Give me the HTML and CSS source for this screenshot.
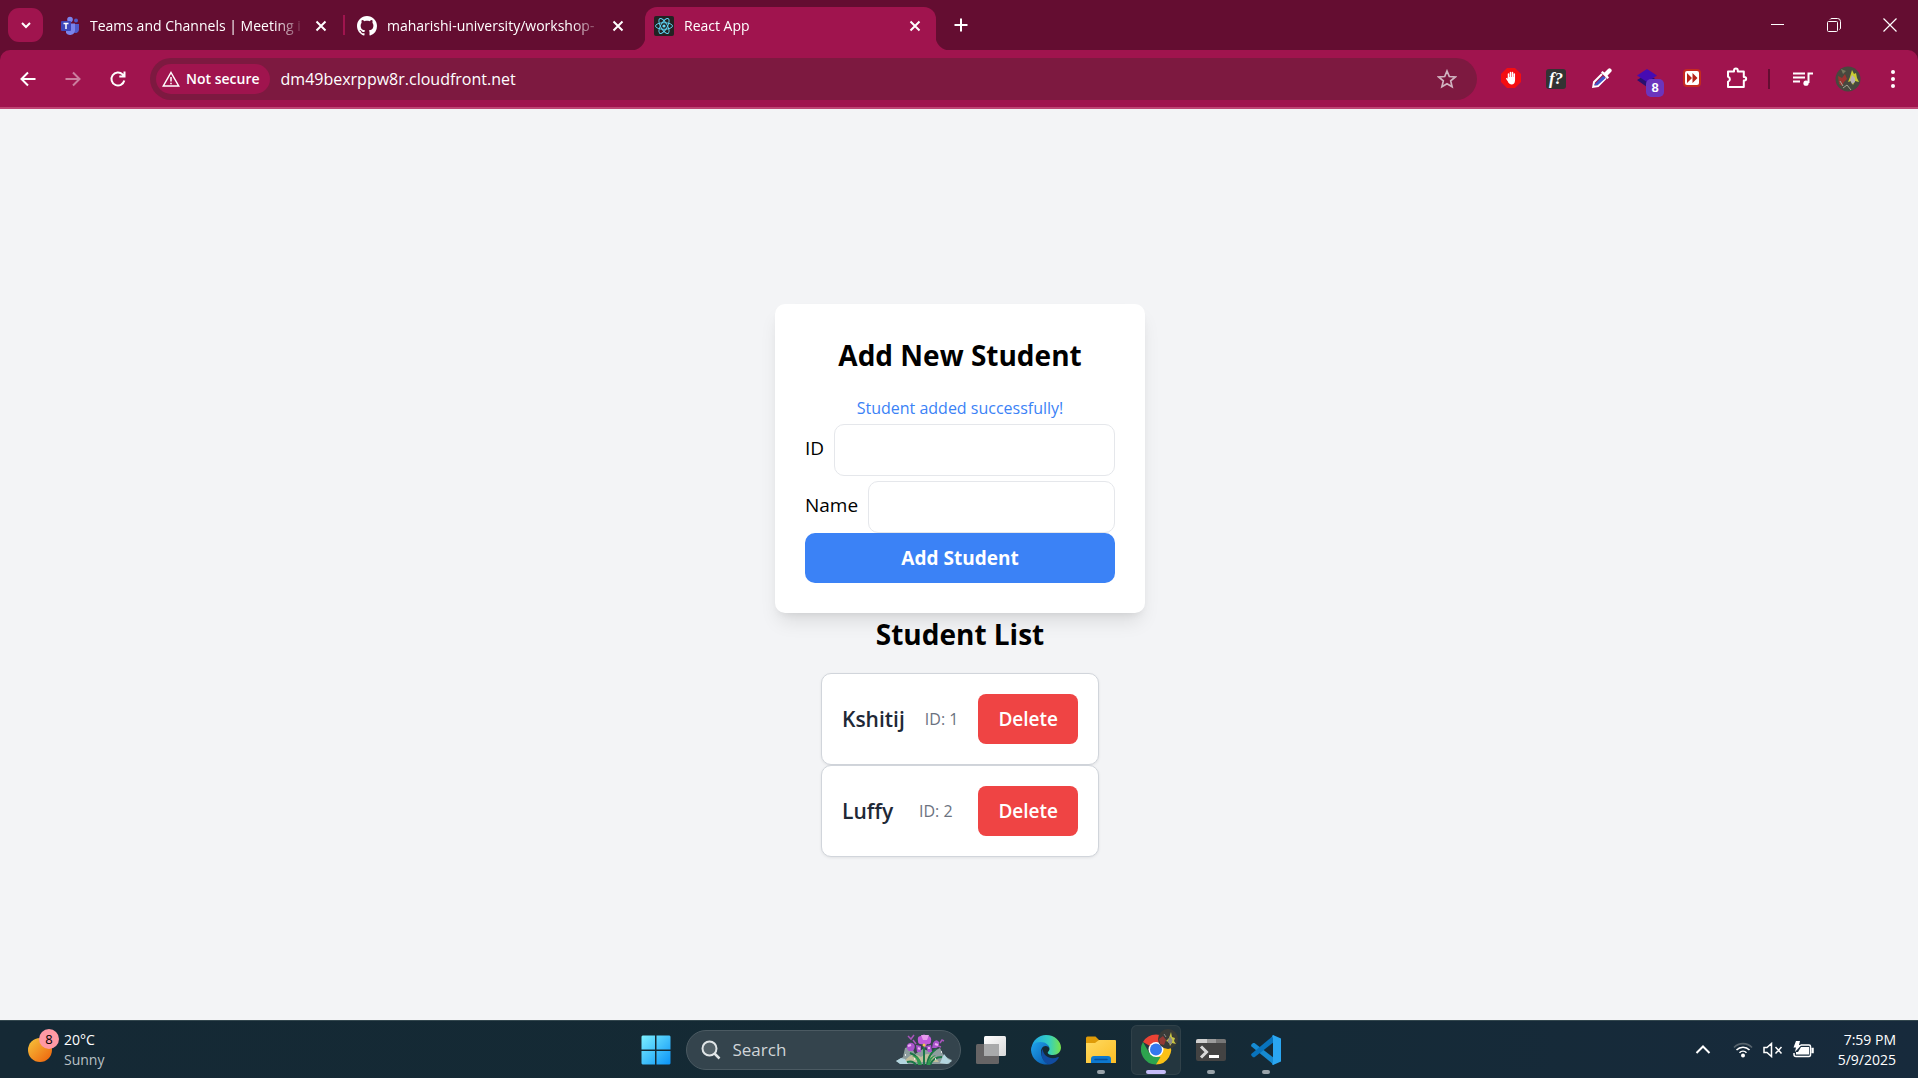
FILE: index.html
```html
<!DOCTYPE html>
<html lang="en">
<head>
<meta charset="utf-8">
<meta name="viewport" content="width=device-width, initial-scale=1">
<title>React App</title>
<link rel="stylesheet" href="styles.css">
</head>
<body>
<header class="browser">
  <div class="tabstrip">
    <button class="tab-search" aria-label="Search tabs"><svg width="16" height="16" viewBox="0 0 16 16" fill="none" stroke="#fff" stroke-width="2"><path d="M4 6l4 4 4-4"/></svg></button>
    <div class="tabs">
      <div class="tab">
        <svg class="favicon" viewBox="0 0 20 20"><circle cx="10" cy="3.600" r="2.800" fill="#7b83eb"/><circle cx="16" cy="4.600" r="2" fill="#5059c9"/><path d="M13 8h6v6a3.500 3.500 0 0 1-6 2z" fill="#5059c9"/><path d="M6 7.500h9v7a5 5 0 0 1-9 2.500z" fill="#7b83eb"/><rect x="1" y="5" width="10" height="10" rx="1" fill="#3d46b8"/><path d="M3.500 7.500h5M6 7.500v5.500" stroke="#fff" stroke-width="1.500"/></svg>
        <span class="tab-title">Teams and Channels | Meeting i</span>
        <button class="tab-close" aria-label="Close tab"><svg width="12" height="12" viewBox="0 0 12 12" stroke="#fff" stroke-width="2"><path d="M1.500 1.500l9 9M10.500 1.500l-9 9"/></svg></button>
      </div>
      <div class="tab tab-divided">
        <svg class="favicon" viewBox="0 0 16 16" fill="#fff"><path d="M8 0C3.580 0 0 3.580 0 8c0 3.540 2.290 6.530 5.470 7.590.4.070.55-.17.55-.38 0-.19-.01-.82-.01-1.490-2.010.37-2.530-.49-2.690-.94-.09-.23-.48-.94-.82-1.130-.28-.15-.68-.52-.01-.53.63-.01 1.080.58 1.230.82.72 1.210 1.870.87 2.330.66.07-.52.28-.87.51-1.070-1.780-.2-3.640-.89-3.640-3.950 0-.87.31-1.590.82-2.150-.08-.2-.36-1.020.08-2.120 0 0 .67-.21 2.200.82.64-.18 1.320-.27 2-.27s1.360.09 2 .27c1.530-1.040 2.200-.82 2.200-.82.44 1.100.16 1.920.08 2.120.51.56.82 1.270.82 2.150 0 3.070-1.870 3.750-3.650 3.950.29.25.54.73.54 1.480 0 1.070-.01 1.930-.01 2.200 0 .21.15.46.55.38A8.010 8.010 0 0 0 16 8c0-4.420-3.580-8-8-8z"/></svg>
        <span class="tab-title">maharishi-university/workshop-</span>
        <button class="tab-close" aria-label="Close tab"><svg width="12" height="12" viewBox="0 0 12 12" stroke="#fff" stroke-width="2"><path d="M1.500 1.500l9 9M10.500 1.500l-9 9"/></svg></button>
      </div>
      <div class="tab tab-active">
        <svg class="favicon" viewBox="0 0 20 20"><rect width="20" height="20" rx="2" fill="#222"/><g fill="none" stroke="#61dafb" stroke-width=".9"><ellipse cx="10" cy="10" rx="8.500" ry="3.300"/><ellipse cx="10" cy="10" rx="8.500" ry="3.300" transform="rotate(60 10 10)"/><ellipse cx="10" cy="10" rx="8.500" ry="3.300" transform="rotate(120 10 10)"/></g><circle cx="10" cy="10" r="1.600" fill="#61dafb"/></svg>
        <span class="tab-title">React App</span>
        <button class="tab-close" aria-label="Close tab"><svg width="12" height="12" viewBox="0 0 12 12" stroke="#fff" stroke-width="2"><path d="M1.500 1.500l9 9M10.500 1.500l-9 9"/></svg></button>
      </div>
    </div>
    <button class="new-tab" aria-label="New tab"><svg width="14" height="14" viewBox="0 0 14 14" stroke="#fff" stroke-width="2"><path d="M7 0.500v13M0.500 7h13"/></svg></button>
    <div class="window-controls">
      <button aria-label="Minimize"><svg width="14" height="14" viewBox="0 0 14 14" stroke="#fff"><path d="M0 6.500h13"/></svg></button>
      <button aria-label="Restore"><svg width="14" height="14" viewBox="0 0 14 14" fill="none" stroke="#fff"><rect x=".5" y="3.500" width="10" height="10" rx="1"/><path d="M3 1.500Q3.500.5 5 .5h5.500a3 3 0 0 1 3 3V10q0 1-1 1.500"/></svg></button>
      <button aria-label="Close"><svg width="14" height="14" viewBox="0 0 14 14" stroke="#fff" stroke-width="1.200"><path d="M.5.5l13 13M13.500.5l-13 13"/></svg></button>
    </div>
  </div>
  <div class="toolbar">
    <div class="nav-buttons">
      <button aria-label="Back"><svg width="20" height="20" viewBox="0 0 20 20" fill="none" stroke="#fff" stroke-width="2"><path d="M17.500 10H3.500M10 3.500L3.500 10l6.500 6.500"/></svg></button>
      <button aria-label="Forward" class="dim"><svg width="20" height="20" viewBox="0 0 20 20" fill="none" stroke="#fff" stroke-width="2"><path d="M2.500 10h14M10 3.500l6.500 6.500-6.500 6.500"/></svg></button>
      <button aria-label="Reload"><svg width="20" height="20" viewBox="0 0 20 20" fill="none" stroke="#fff" stroke-width="2"><path d="M16.300 11.500A6.500 6.500 0 1 1 14.600 5.400L16 7M16.500 2.500v5.100h-5.200"/></svg></button>
    </div>
    <div class="omnibox">
      <button class="security-chip"><svg width="18" height="16" viewBox="0 0 18 16" fill="none" stroke="#fff" stroke-width="1.500"><path d="M9 1.500L16.700 15H1.300zM9 6v4.500M9 11.700v1.500"/></svg>Not secure</button>
      <input class="address" type="text" aria-label="Address" value="dm49bexrppw8r.cloudfront.net">
      <button class="bookmark" aria-label="Bookmark"><svg width="20" height="20" viewBox="0 0 20 20" fill="none" stroke="#d0b4c0" stroke-width="1.700"><path d="M10 2l2.300 5.500 6 .5-4.600 3.900 1.400 5.900L10 14.700l-5.100 3.100 1.400-5.900L1.700 8l6-.5z"/></svg></button>
    </div>
    <div class="extensions">
      <button aria-label="Ad blocker"><svg width="20" height="20" viewBox="0 0 20 20"><path d="M6 0h8l6 6v8l-6 6H6l-6-6V6z" fill="#f40d12"/><path d="M7.500 6v5M9.500 4.500v6M11.500 4.500V11M13.300 6v6" stroke="#fff" stroke-width="1.500" stroke-linecap="round"/><path d="M6.800 9h7.200v3.500c0 2.700-1.400 4-3.400 4-1.700 0-2.700-.9-3.500-2.500z" fill="#fff"/><path d="M5.800 10.700l2 3" stroke="#fff" stroke-width="1.500" stroke-linecap="round"/></svg></button>
      <button aria-label="Font finder" class="font-finder">f?</button>
      <button aria-label="Color picker"><svg width="20" height="20" viewBox="0 0 20 20"><path d="M10 6L2 14l-.8 4.800L6 18l8-8" fill="none" stroke="#fff" stroke-width="2"/><path d="M11 9l-7.500 7.500 1.800.1L12.500 10z" fill="#4054c8" stroke="#4054c8" stroke-width="1.500"/><path d="M9 4.500l1.500-1.500 2 1.500L16 1q1.500-1.500 3 0t0 3l-3.500 3.500L17 9.500 15.500 11z" fill="#fff"/></svg></button>
      <button aria-label="Layers" class="layers"><svg width="20" height="20" viewBox="0 0 20 20"><path d="M0 12l10-6 10 6-10 7z" fill="#27106f"/><path d="M0 7.500L10 1l10 6.500L10 14z" fill="#460bb3"/></svg><span class="badge">8</span></button>
      <button aria-label="Fast forward"><svg width="20" height="20" viewBox="0 0 20 20"><rect x="1" y="1" width="18" height="18" rx="4" fill="#c52b20"/><rect x="3" y="3" width="14" height="14" rx="2" fill="#fff"/><path d="M5 5l5 5-5 5zM10.500 5l5 5-5 5z" fill="#b52319"/></svg></button>
      <button aria-label="Extensions"><svg width="22" height="22" viewBox="0 0 22 22" fill="none" stroke="#fff" stroke-width="2" stroke-linejoin="round"><path d="M2 4.500h6V3.500a1.700 1.700 0 0 1 3.800 0v1h6v5.500h.6a1.600 1.600 0 0 1 0 3.500h-.6V20H2v-5.300a2.600 2.600 0 0 0 0-5z"/></svg></button>
    </div>
    <div class="profile-area">
      <button aria-label="Media controls"><svg width="20" height="20" viewBox="0 0 20 20" fill="none" stroke="#fff" stroke-width="2"><path d="M0 4.500h12M0 8.500h12M0 12.500h7M15.500 14V4.500H20"/><circle cx="13" cy="14.200" r="2.600" fill="#fff" stroke="none"/></svg></button>
      <button aria-label="Profile"><svg width="26" height="26" viewBox="0 0 26 26"><circle cx="13" cy="13" r="12.500" fill="#47483e"/><path d="M3 10l4 2 3-4 2 5-3 3-2 4-3-2z" fill="#9b3431"/><path d="M6 3l5 2-3 3z" fill="#77795f"/><path d="M17 4l2 4 2-1 1 5 2 4-4-1-2 4-2-4-3 1 2-5z" fill="#c9cc32"/><path d="M17 9l3 3v4l-3 2-2-4z" fill="#b8b1b4"/><path d="M8 22l4-3 4 5M5 15l3 5" stroke="#a6a594" fill="none"/></svg></button>
      <button aria-label="Menu"><svg width="20" height="20" viewBox="0 0 20 20" fill="#fff"><circle cx="10" cy="3" r="2"/><circle cx="10" cy="10" r="2"/><circle cx="10" cy="17" r="2"/></svg></button>
    </div>
  </div>
</header>

<main class="page">
  <section class="card">
    <h2 class="heading">Add New Student</h2>
    <p class="message">Student added successfully!</p>
    <form class="student-form">
      <div class="field"><label for="student-id">ID</label><input id="student-id" type="text"></div>
      <div class="field"><label for="student-name">Name</label><input id="student-name" type="text"></div>
      <button type="button" class="add-button">Add Student</button>
    </form>
  </section>
  <section class="student-section">
    <h2 class="heading">Student List</h2>
    <ul class="student-list">
      <li><span class="student-name">Kshitij</span><span class="student-id">ID: 1</span><button class="delete-button">Delete</button></li>
      <li><span class="student-name">Luffy</span><span class="student-id">ID: 2</span><button class="delete-button">Delete</button></li>
    </ul>
  </section>
</main>

<footer class="taskbar">
  <button class="weather">
    <span class="weather-icon"><svg width="24" height="24" viewBox="0 0 24 24"><defs><linearGradient id="sun" x1="0" y1="0" x2="1" y2="1"><stop offset="0" stop-color="#f6c63c"/><stop offset="1" stop-color="#ee5f0b"/></linearGradient></defs><circle cx="12" cy="12" r="12" fill="url(#sun)"/></svg><span class="weather-badge">8</span></span>
    <span class="weather-text"><span>20°C</span><span class="muted">Sunny</span></span>
  </button>
  <div class="apps">
    <button class="app" aria-label="Start"><svg width="30" height="30" viewBox="0 0 30 30"><defs><linearGradient id="win" x1="0" y1="0" x2="1" y2="1"><stop offset="0" stop-color="#7cf0ff"/><stop offset="1" stop-color="#0a93f7"/></linearGradient></defs><path d="M1.500.5H14v14H.5v-13zM15.500.5h13l1 1v13h-14zM.5 16H14v13.500H1.500l-1-1zM15.500 16h14v12.500l-1 1h-13z" fill="url(#win)"/></svg></button>
    <div class="search">
      <svg width="20" height="20" viewBox="0 0 20 20" fill="none" stroke="#e0e5e7" stroke-width="2"><circle cx="8.500" cy="8.500" r="7" fill="#536168"/><path d="M13.500 13.500l5 5" stroke-width="2.500"/></svg>
      <input type="text" placeholder="Search" aria-label="Search">
      <svg width="56" height="32" viewBox="0 0 56 32"><path d="M0 27l7-4 2-9 6-2 4 8 8-5 9 3 8-4 4 8 8 4-3 4H5z" fill="#8d9d9e"/><path d="M8 28q8-12 17-5 8-8 18 5z" fill="#c2bf9c"/><path d="M0 27l5-3 4 1 3 5H4zM44 29l4-9 4 5 4 2-5 3z" fill="#b4d6df"/><path d="M28 31V13M24 31q-1-9-10-12M31 31q1-10 9-16M34 31q3-8 12-8M20 31q-3-5-9-3" fill="none" stroke="#1c7747" stroke-width="2"/><path d="M22 31q-1-8-6-9 8-1 10 9zM31 31q2-9 9-10-6 4-6 10z" fill="#2f9b50"/><path d="M22 7q-1-5 3-5 3-3 6 0 5 0 4 5 0 4-4 3l-2 4-2-4q-5 1-5-3z" fill="#c25bdb"/><path d="M25 1h8l-2 5h-4z" fill="#e79bed"/><path d="M11 11q3-4 7-1 2 3-1 7h-4q-3-2-2-6zM20 11l5 1v6h-4zM30 12l5-1 1 7h-4zM37 9q3-5 6-1 1 5-3 6h-4z" fill="#a953cb"/><path d="M12 2l3 3 3-4M17 6l3 4M44 9l2-3 2 1M42 12l3 1" stroke="#a854bb" stroke-width="1.500" fill="none"/><path d="M12 12l3-1M39 10l3 1M22 14l2 1M32 14h2" stroke="#efaff5" stroke-width="2"/><circle cx="28" cy="11" r="1.500" fill="#f2c650"/><path d="M9 21h1M45 18h1M18 25h1M39 25h1" stroke="#fff" stroke-width="1.500"/></svg>
    </div>
    <button class="app" aria-label="Task view"><svg width="30" height="28" viewBox="0 0 30 28"><defs><linearGradient id="tv" x1="0" y1="0" x2="1" y2="1"><stop offset="0" stop-color="#fff"/><stop offset="1" stop-color="#d8d8d8"/></linearGradient></defs><rect y="8" width="23" height="20" rx="1.500" fill="#666465"/><rect x="8" width="22" height="20" rx="1.500" fill="url(#tv)"/><path d="M8 8h15v12H8z" fill="#a9aaab"/></svg></button>
    <button class="app" aria-label="Edge"><svg width="30" height="30" viewBox="0 0 30 30"><defs><linearGradient id="e1" x1="0" y1="0" x2="1" y2="0"><stop offset="0" stop-color="#1ea4e9"/><stop offset=".6" stop-color="#35cfbf"/><stop offset="1" stop-color="#78e34a"/></linearGradient><linearGradient id="e2" x1="0" y1="0" x2="1" y2="1"><stop offset="0" stop-color="#1fa4ec"/><stop offset="1" stop-color="#0956ad"/></linearGradient></defs><path d="M.5 13C1.500 5.500 7.500 0 15 0c9 0 15 6.500 15 12.500 0 4.500-3.500 7.500-8 7.500-4 0-6-1.500-5-3 .8-1 1.500-1.800 1.500-3C18.500 10.500 14.500 8 10 8 5 8 2 10 .5 13z" fill="url(#e1)"/><path d="M0 15c0-4.500 4-8 9.500-8 5.500 0 9 3.500 9 7 0-1.500-1.800-3-4-3-3 0-4.500 3-4.500 6 0 6 5 12.500 9 12A15 15 0 0 1 0 15z" fill="url(#e2)"/><path d="M11.500 14C8 20 13 29 19 29.500c4-1 7-3.500 8.800-6.800.3-.7-.2-1-.8-.7C20 25.500 12.500 21.500 11.500 14z" fill="#114ca1"/></svg></button>
    <button class="app running" aria-label="File Explorer"><svg width="30" height="28" viewBox="0 0 30 28"><defs><linearGradient id="fl" x1="0" y1="0" x2="1" y2="1"><stop offset="0" stop-color="#ffda61"/><stop offset="1" stop-color="#fcbd24"/></linearGradient></defs><path d="M0 2q0-1.500 1.500-1.500h8L13 4v5H0z" fill="#df9b08"/><path d="M0 7h9l4-3h16q1 0 1 1v22H0z" fill="url(#fl)"/><path d="M5 27v-4q0-3 3-3h14q3 0 3 3v4z" fill="#0d79cf"/><path d="M9 23.500h12" stroke="#07509b" stroke-width="1.500" stroke-linecap="round"/></svg></button>
    <button class="app running current" aria-label="Chrome"><svg width="38" height="36" viewBox="0 0 38 36"><path d="M15 20.500L2 13A15 15 0 0 1 28 13z" fill="#ea4335"/><path d="M15 20.500L28 13a15 15 0 0 1-13 22.500z" fill="#fbc116"/><path d="M2 13l6.500 11.200L15 28h4.500L15 35.500A15 15 0 0 1 2 13z" fill="#2da44e"/><circle cx="15" cy="20.500" r="7.500" fill="#fff"/><circle cx="15" cy="20.500" r="6" fill="#3478ed"/><circle cx="27" cy="10" r="10" fill="#393b38"/><path d="M18 10l4-3 3 4-2 5-4-1z" fill="#943a35"/><path d="M30 3l1 5 3 1-1 3 2 3-4-1-2 3-1-4-3-1 3-3z" fill="#c8c540"/><path d="M29 8l2 3-1 4-3-2zM23 5l2 3" stroke="#8b8989" fill="#8b8989"/></svg></button>
    <button class="app running" aria-label="Terminal"><svg width="30" height="24" viewBox="0 0 30 24"><rect y="1" width="30" height="22" rx="2" fill="#434343"/><path d="M2 1h9v4H0V3q0-2 2-2z" fill="#d0d0d0"/><path d="M11 1h9v4h-9z" fill="#9b9b9b"/><path d="M20 1h8q2 0 2 2v2H20z" fill="#777"/><path d="M5 8.500l5.500 5.500L5 19.500" fill="none" stroke="#d8d8d8" stroke-width="3"/><path d="M13 18.500h10" stroke="#fff" stroke-width="3"/></svg></button>
    <button class="app running" aria-label="Visual Studio Code"><svg width="30" height="30" viewBox="0 0 30 30"><path d="M0 10l2-2h1.500L23 23v7L.5 11.500z" fill="#168bd2"/><path d="M0 20l2 2.200h1.500L23 7V0L.5 18.700z" fill="#0873bd"/><path d="M22 0l8 3.500v23L22 30q-1.500 0 0-3V3q-1.500-2.500 0-3z" fill="#2aa6f2"/></svg></button>
  </div>
  <div class="tray">
    <button aria-label="Show hidden icons"><svg width="16" height="16" viewBox="0 0 16 16" fill="none" stroke="#fff" stroke-width="2"><path d="M1.500 11L8 4.500l6.500 6.500"/></svg></button>
    <button class="status" aria-label="Network, volume and battery">
      <svg width="20" height="16" viewBox="0 0 20 16" fill="none" stroke="#fff" stroke-width="1.600"><path d="M1 5.500a12.500 12.500 0 0 1 18 0" stroke="#57636c"/><path d="M3.500 8a9 9 0 0 1 13 0M6.500 10.700a5 5 0 0 1 7 0"/><circle cx="10" cy="13.500" r="2" fill="#fff" stroke="none"/></svg>
      <svg width="20" height="16" viewBox="0 0 20 16" fill="none" stroke="#fff" stroke-width="1.500"><path d="M1 5.500h3L8.500 1.500v13L4 10.500H1zM12.500 5l6 6.500M18.500 5l-6 6.500"/></svg>
      <svg width="21" height="18" viewBox="0 0 21 18" fill="none" stroke="#fff" stroke-width="1.500"><path d="M7.500 4H16q1.500 0 1.500 1.500v8q0 2-1.500 2H3q-2 0-2-2V12"/><path d="M8 6h8v7.500H3V11h2z" fill="#fff" stroke="none"/><path d="M18.500 7.500h1.500v4h-1.500" fill="#fff"/><path d="M3 0h4L6 4h2.500L2 11l1-4.500H.5z" fill="#fff" stroke="none"/></svg>
    </button>
    <button class="clock"><span>7:59 PM</span><span>5/9/2025</span></button>
  </div>
</footer>
</body>
</html>
```
FILE: styles.css
```css
* { box-sizing: border-box; }

body {
  margin: 0;
  min-height: 100vh;
  display: flex;
  flex-direction: column;
  background: #f3f4f6;
  color: #000;
  font: 15px/20px "Open Sans", "Noto Sans", sans-serif;
}

button, input { font: inherit; color: inherit; }
button { border: 0; padding: 0; background: none; cursor: pointer; }
input { min-width: 0; border: 0; outline: 0; }
svg { display: block; flex: none; }
h2, p, ul { margin: 0; padding: 0; }

/* Browser window */
.browser { color: #fff; background: #640d31; }

.tabstrip { display: flex; align-items: center; height: 50px; padding-left: 8px; font-size: 14px; }

.tab-search {
  display: grid;
  place-items: center;
  width: 35px;
  height: 34px;
  border-radius: 11px;
  background: #a0144e;
}

.tabs { display: flex; gap: 6px; align-self: flex-end; margin-left: 8px; }

.tab {
  position: relative;
  display: flex;
  align-items: center;
  gap: 10px;
  width: 291px;
  height: 43px;
  padding: 0 15px 6px 9px;
}

.tab-divided::before {
  content: "";
  position: absolute;
  left: -5px;
  top: 8px;
  width: 2px;
  height: 20px;
  background: #a0144e;
}

.tab-active { background: #a0144e; border-radius: 12px 12px 0 0; }

.tab-active::before,
.tab-active::after {
  content: "";
  position: absolute;
  bottom: 0;
  width: 14px;
  height: 14px;
}

.tab-active::before { right: 100%; background: radial-gradient(circle at 0 0, #640d31 14px, #a0144e 15px); }
.tab-active::after { left: 100%; background: radial-gradient(circle at 100% 0, #640d31 14px, #a0144e 15px); }

.favicon { width: 20px; height: 20px; }

.tab-title {
  flex: 1;
  overflow: hidden;
  white-space: nowrap;
  mask-image: linear-gradient(to right, #000 calc(100% - 30px), transparent);
}

.tab-close { display: grid; place-items: center; width: 12px; height: 20px; }
.new-tab { display: grid; place-items: center; width: 34px; height: 34px; margin-left: 8px; }

.window-controls { display: flex; margin-left: auto; }
.window-controls button { display: grid; place-items: center; width: 56px; height: 50px; }

.toolbar {
  display: flex;
  align-items: center;
  height: 59px;
  padding: 0 8px 0 10px;
  background: #a0144e;
  border-bottom: 2px solid #bf4574;
  border-radius: 10px 10px 0 0;
}

.nav-buttons { display: flex; gap: 10px; margin-right: 15px; }
.nav-buttons button, .extensions button { display: grid; place-items: center; width: 35px; height: 35px; }
.dim { opacity: .45; }

.omnibox {
  display: flex;
  flex: 1;
  align-items: center;
  height: 42px;
  padding: 0 20px 0 6px;
  border-radius: 21px;
  background: #7d1940;
}

.security-chip {
  display: flex;
  align-items: center;
  gap: 6px;
  height: 30px;
  padding: 0 10px 0 6px;
  border-radius: 15px;
  background: #a0144e;
  font-size: 14px;
  font-weight: 600;
}

.address { flex: 1; height: 30px; padding: 0 11px; background: none; font-size: 16px; }

.extensions { display: flex; gap: 10px; margin-left: 16px; }
.extensions .layers { position: relative; }

.badge {
  position: absolute;
  left: 17px;
  top: 18px;
  width: 18px;
  height: 18px;
  border-radius: 5px;
  background: #6b35bd;
  font: 600 13px/18px "Liberation Sans", sans-serif;
}

.extensions .font-finder {
  width: 20px;
  height: 20px;
  margin: 8px;
  border-radius: 3px;
  background: #333;
  font: italic bold 17px/18px "Liberation Serif", serif;
}

.profile-area {
  display: flex;
  align-items: center;
  gap: 10px;
  margin-left: 14px;
  padding-left: 17px;
  background: linear-gradient(#640d31, #640d31) left center / 2px 20px no-repeat;
}

.profile-area button { display: grid; place-items: center; width: 35px; height: 35px; }

/* Student page */
.page {
  flex: 1;
  display: flex;
  flex-direction: column;
  align-items: center;
  justify-content: center;
  padding: 32px 0 0 2px;
}

.heading { font-size: 28px; line-height: 42px; font-weight: 700; text-align: center; }

.card {
  width: 370px;
  padding: 30px;
  border-radius: 10px;
  background: #fff;
  box-shadow: 0 12px 19px -4px rgb(0 0 0 / .1), 0 5px 8px -5px rgb(0 0 0 / .1);
}

.card .heading { margin-bottom: 18px; }
.message { margin-bottom: 2px; color: #3b82f6; font-size: 16px; line-height: 28px; text-align: center; }

.student-form { display: flex; flex-direction: column; font-size: 19px; }
.field { display: flex; align-items: center; gap: 10px; }
.field + .field { margin-top: 5px; }
.field label { padding-bottom: 4px; }
.field input { flex: 1; height: 52px; padding: 10px; border: 1px solid #e5e7eb; border-radius: 10px; background: #fff; }
.add-button { height: 50px; border-radius: 10px; background: #3b82f6; color: #fff; font-size: 19px; font-weight: 700; }

.student-section .heading { margin-bottom: 18px; }
.student-list { list-style: none; }

.student-list li {
  display: flex;
  align-items: center;
  justify-content: space-between;
  gap: 20px;
  padding: 20px;
  border: 1px solid #d1d5db;
  border-radius: 10px;
  background: #fff;
  box-shadow: 0 1px 3px rgb(0 0 0 / .08);
}

.student-name { color: #1f2937; font-size: 21px; font-weight: 600; }
.student-id { color: #6b7280; font-size: 16px; }
.delete-button { height: 50px; padding: 0 20px; border-radius: 8px; background: #ef4444; color: #fff; font-size: 19px; font-weight: 600; }

/* Taskbar */
.taskbar {
  display: grid;
  grid-template-columns: 1fr auto 1fr;
  align-items: center;
  height: 58px;
  padding-left: 3px;
  border-top: 1px solid #33474e;
  background: linear-gradient(to right, #152935, #142a34 50%, #172a3c);
  color: #fff;
  font-size: 14px;
}

.weather { display: flex; justify-self: start; align-items: center; gap: 12px; margin-left: 25px; text-align: left; }
.weather-icon { position: relative; }

.weather-badge {
  position: absolute;
  left: 11px;
  top: -9px;
  width: 20px;
  height: 20px;
  border-radius: 50%;
  background: #ff99a4;
  color: #000;
  font-size: 13px;
  text-align: center;
}

.weather-text, .clock { display: flex; flex-direction: column; }
.muted { color: #b9c0c5; }

.apps { display: flex; align-items: center; gap: 5px; }
.app { position: relative; display: grid; place-items: center; width: 50px; height: 50px; border-radius: 6px; }
.current { background: #24363f; box-shadow: inset 0 0 0 1px #304149; }
.current svg { margin: 0 0 6px 8px; }

.running::after {
  content: "";
  position: absolute;
  left: 21px;
  bottom: 1px;
  width: 8px;
  height: 4px;
  border-radius: 2px;
  background: #98a2a9;
}

.current::after { left: 15px; width: 20px; background: #c5bcf8; }

.search {
  display: flex;
  align-items: center;
  gap: 10px;
  width: 275px;
  height: 40px;
  padding: 0 8px 0 14px;
  border: 1px solid #4b5a62;
  border-radius: 20px;
  background: #34444d;
}

.search input { flex: 1; background: none; font-size: 17px; }
.search input::placeholder { color: #d0d5d8; opacity: 1; }

.tray { display: flex; justify-self: end; align-items: center; padding-right: 22px; }
.status { display: flex; align-items: center; gap: 10px; margin: 0 21px 0 22px; }
.clock { min-width: 61px; text-align: right; }
```
